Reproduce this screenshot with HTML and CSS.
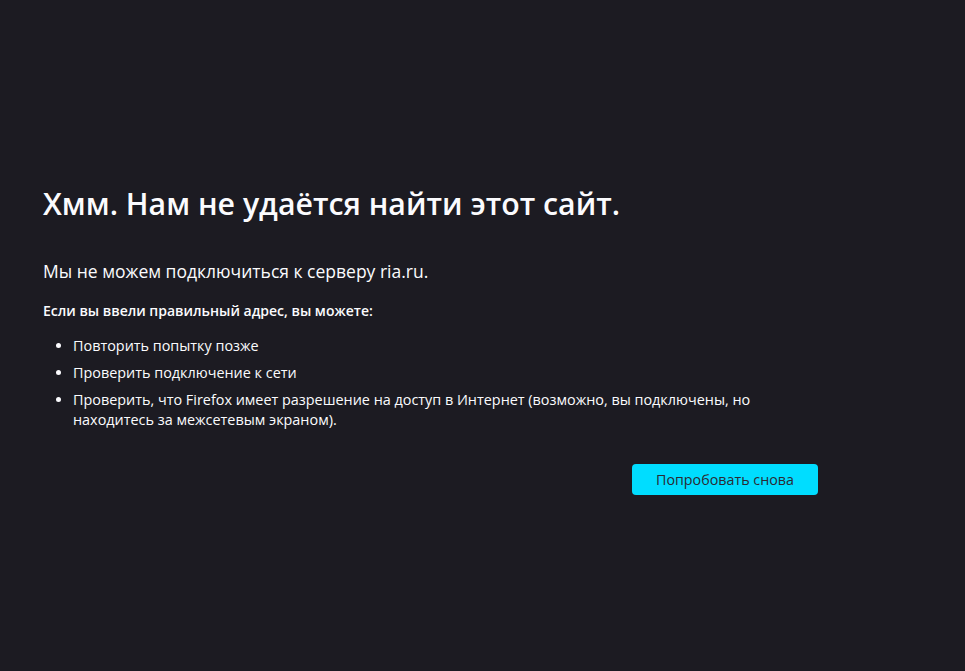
FILE: index.html
```html
<!DOCTYPE html>
<html lang="ru">
<head>
    <meta charset="UTF-8">
    <meta name="viewport" content="width=device-width, initial-scale=1.0">
    <title>Проблема при загрузке страницы</title>
    <link rel="stylesheet" href="styles.css">
</head>
<body>
    <div class="container">
        <h1 class="title">Хмм. Нам не удаётся найти этот сайт.</h1>
        <p class="short-desc">Мы не можем подключиться к серверу ria.ru.</p>
        <div class="long-desc">
            <strong>Если вы ввели правильный адрес, вы можете:</strong>
            <ul>
                <li>Повторить попытку позже</li>
                <li>Проверить подключение к сети</li>
                <li>Проверить, что Firefox имеет разрешение на доступ в Интернет (возможно, вы подключены, но находитесь за межсетевым экраном).</li>
            </ul>
        </div>
        <div class="button-container">
            <button class="primary">Попробовать снова</button>
        </div>
    </div>
</body>
</html>
```

FILE: styles.css
```css
html, body {
    margin: 0;
    height: 100%;
}
body {
    font-family: "Open Sans", "Noto Sans", sans-serif;
    font-size: 15px;
    color: #fbfbfe;
    background-color: #1c1b22;
    display: flex;
    flex-direction: column;
    justify-content: center;
    box-sizing: border-box;
    padding: 0 43px;
}
.container {
    max-width: 775px;
    margin-top: 7px;
}
.title {
    font-size: 30.3px;
    font-weight: 600;
    line-height: 40px;
    margin: 0 0 35px;
}
.short-desc {
    font-size: 17.5px;
    line-height: 24px;
    margin: 0 0 18px;
}
.long-desc strong {
    display: block;
    font-weight: 600;
    font-size: 14px;
    line-height: 20px;
    margin-bottom: 15px;
}
.long-desc ul {
    margin: 0;
    padding-left: 30px;
}
.long-desc li {
    font-size: 14.4px;
    line-height: 20px;
    margin-bottom: 7px;
}
.button-container {
    display: flex;
    justify-content: flex-end;
    margin-top: 34px;
}
.primary {
    font-family: inherit;
    font-size: 14.3px;
    color: #2b2a33;
    background-color: #00ddff;
    border: none;
    border-radius: 4px;
    width: 186px;
    height: 31px;
    cursor: pointer;
}
```
